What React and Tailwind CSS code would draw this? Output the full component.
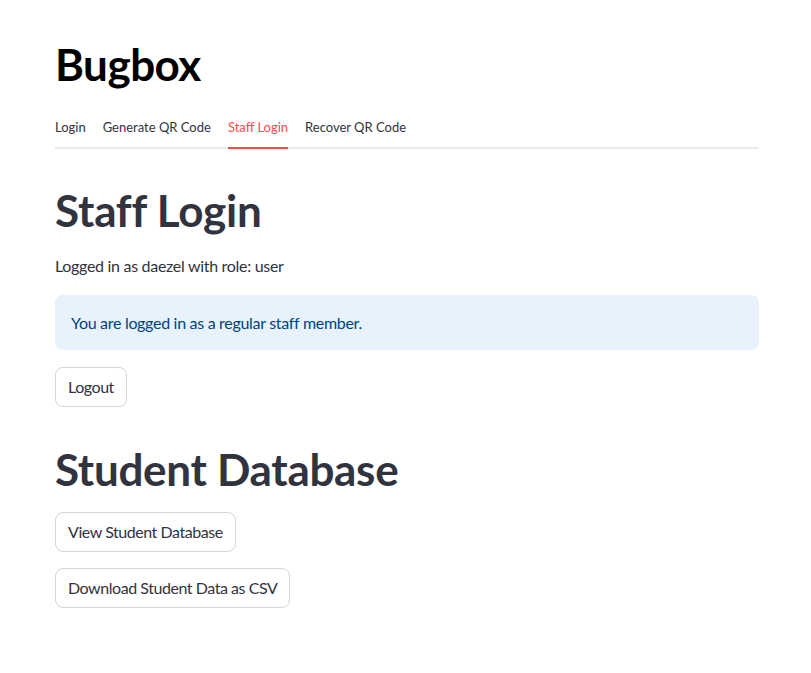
import React from 'react';

const tabs = ['Login', 'Generate QR Code', 'Staff Login', 'Recover QR Code'];

const Button = ({ children }) => (
  <button className="h-[40px] px-[12px] rounded-lg border border-[#d6d6d9] bg-white text-[16px] tracking-[-0.45px] text-[#31333f] leading-none">
    {children}
  </button>
);

const App = () => {
  const active = 'Staff Login';

  return (
    <div className="min-h-[673px] bg-white font-['Lato','Liberation_Sans',sans-serif] text-[#31333f]">
      <div className="pl-[55px] pr-[52px] pt-[38px]">
        {/* App title */}
        <h1 className="text-[44px] font-bold leading-[52px] text-black tracking-[-0.5px]">Bugbox</h1>

        {/* Tabs */}
        <div className="mt-[27px] flex gap-[17px] border-b-2 border-[#ebebeb] text-[13px]">
          {tabs.map((tab) => (
            <div
              key={tab}
              className={`-mb-[2px] pb-[10px] border-b-2 leading-[20px] ${
                tab === active ? 'border-[#ff4b4b] text-[#ff4b4b]' : 'border-transparent text-[#31333f]'
              }`}
            >
              {tab}
            </div>
          ))}
        </div>

        {/* Staff login */}
        <h1 className="mt-[35px] text-[44px] font-bold leading-[52px] tracking-[-0.2px]">Staff Login</h1>
        <p className="mt-[18px] text-[16px] leading-[24px] tracking-[-0.3px]">Logged in as daezel with role: user</p>

        <div className="mt-[17px] h-[55px] flex items-center px-[16px] rounded-lg bg-[#e8f2fc] text-[#004280] text-[16px] tracking-[-0.3px]">
          You are logged in as a regular staff member.
        </div>

        <div className="mt-[17px]">
          <Button>Logout</Button>
        </div>

        {/* Student database */}
        <h1 className="mt-[36px] text-[44px] font-bold leading-[52px] tracking-[-0.3px]">Student Database</h1>

        <div className="mt-[17px] flex flex-col items-start gap-[16px]">
          <Button>View Student Database</Button>
          <Button>Download Student Data as CSV</Button>
        </div>
      </div>
    </div>
  );
};

export default App;
